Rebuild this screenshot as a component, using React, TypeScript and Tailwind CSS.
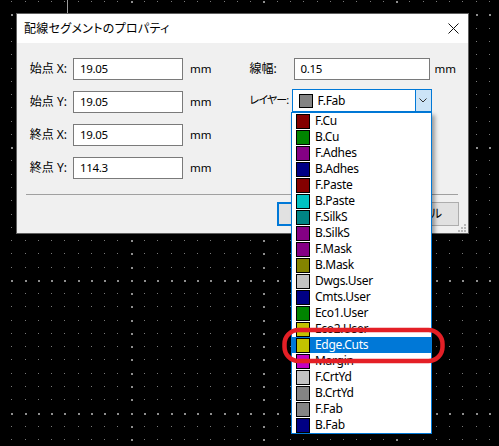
import React from 'react';

const layers: { name: string; color: string }[] = [
  { name: 'F.Cu', color: '#840000' },
  { name: 'B.Cu', color: '#008400' },
  { name: 'F.Adhes', color: '#840084' },
  { name: 'B.Adhes', color: '#000084' },
  { name: 'F.Paste', color: '#840000' },
  { name: 'B.Paste', color: '#00c2c2' },
  { name: 'F.SilkS', color: '#008484' },
  { name: 'B.SilkS', color: '#840084' },
  { name: 'F.Mask', color: '#840084' },
  { name: 'B.Mask', color: '#848400' },
  { name: 'Dwgs.User', color: '#c2c2c2' },
  { name: 'Cmts.User', color: '#000084' },
  { name: 'Eco1.User', color: '#008400' },
  { name: 'Eco2.User', color: '#c2c200' },
  { name: 'Edge.Cuts', color: '#c2c200' },
  { name: 'Margin', color: '#c200c2' },
  { name: 'F.CrtYd', color: '#c2c2c2' },
  { name: 'B.CrtYd', color: '#848484' },
  { name: 'F.Fab', color: '#848484' },
  { name: 'B.Fab', color: '#000084' },
];

const selected = 'Edge.Cuts';

// canvas grid: one dot every ~13.27px, brighter marks every 10th line
const STEP = 13.27;
const gridDots: { x: number; y: number; major: boolean }[] = [];
for (let i = 0; i < 38; i++) {
  for (let j = 0; j < 35; j++) {
    const x = Math.round(11.3 + i * STEP);
    const y = Math.round(1.2 + j * STEP);
    if (x > 499) continue;
    gridDots.push({ x, y, major: i % 10 === 9 || j % 10 === 1 });
  }
}

function CanvasGrid() {
  return (
    <svg className="absolute inset-0" width="499" height="446" shapeRendering="crispEdges">
      {gridDots.map((d, k) => (
        <rect
          key={k}
          x={d.x}
          y={d.y}
          width={d.major ? 2 : 1}
          height={d.major ? 2 : 1}
          fill={d.major ? '#8e8e8e' : '#7a7a7a'}
        />
      ))}
    </svg>
  );
}

function TextInput({ value, width }: { value: string; width: string }) {
  return (
    <div
      className={`flex h-[22px] ${width} items-center border border-[#7a7a7a] bg-white pl-[6px] text-[11.5px] tracking-[-0.3px] text-black`}
    >
      {value}
    </div>
  );
}

function Swatch({ color }: { color: string }) {
  return <span className="h-[15px] w-[14px] shrink-0 border border-black" style={{ backgroundColor: color }} />;
}

function LeftRow({ label, value }: { label: string; value: string }) {
  return (
    <div className="flex h-[22px] items-center">
      <span className="w-[42px] whitespace-nowrap pr-[1px] text-right">{label}</span>
      <div className="ml-[5px]">
        <TextInput value={value} width="w-[110px]" />
      </div>
      <span className="ml-[7px] text-[11.5px]">mm</span>
    </div>
  );
}

export default function App() {
  return (
    <div
      className="relative h-[446px] w-[499px] overflow-hidden bg-black text-[12px] text-black [font-feature-settings:'palt']"
      style={{ fontFamily: '"Noto Sans", "Noto Sans CJK JP", sans-serif' }}
    >
      <CanvasGrid />
      <div className="absolute left-[67px] top-0 h-[13px] w-px bg-[#9c9c9c]" />

      {/* dialog window */}
      <div className="absolute left-[16px] top-[13px] flex h-[221px] w-[453px] flex-col border border-[#5f5f5f] bg-[#f0f0f0]">
        <div className="flex h-[29px] shrink-0 items-center justify-between bg-white pl-[7px] pr-[9px]">
          <span className="text-[12px] leading-none tracking-[0.3px]">配線セグメントのプロパティ</span>
          <svg width="11" height="11" viewBox="0 0 11 11">
            <path d="M0.5 0.5 L10.5 10.5 M10.5 0.5 L0.5 10.5" stroke="#111" strokeWidth="1" />
          </svg>
        </div>

        <div className="relative flex flex-1 flex-col pl-[9px] pr-[10px] pt-[15px]">
          <div className="flex">
            <div className="flex flex-col gap-[11px]">
              <LeftRow label="始点 X:" value="19.05" />
              <LeftRow label="始点 Y:" value="19.05" />
              <LeftRow label="終点 X:" value="19.05" />
              <LeftRow label="終点 Y:" value="114.3" />
            </div>

            <div className="ml-[38px] flex flex-col">
              <div className="flex h-[22px] items-center">
                <span className="w-[44px] whitespace-nowrap">線幅:</span>
                <TextInput value="0.15" width="w-[136px]" />
                <span className="ml-[5px] text-[11.5px]">mm</span>
              </div>
              <div className="mt-[9px] flex h-[23px] items-center">
                <span className="w-[42px] shrink-0 whitespace-nowrap text-[11px] tracking-[-0.9px]">レイヤー:</span>
                <div className="flex h-[23px] w-[140px] shrink-0 border border-[#0078d7] bg-white">
                  <div className="flex flex-1 items-center pl-[6px]">
                    <span className="h-[14px] w-[14px] border border-black bg-[#848484]" />
                    <span className="ml-[5px] text-[12px] tracking-[-0.3px]">F.Fab</span>
                  </div>
                  <div className="flex w-[16px] items-center justify-center border-l border-[#0078d7] bg-[#cce4f7]">
                    <svg width="8" height="5" viewBox="0 0 8 5">
                      <path d="M0.5 0.5 L4 4 L7.5 0.5" fill="none" stroke="#333" strokeWidth="1" />
                    </svg>
                  </div>
                </div>
              </div>
            </div>
          </div>

          <div className="mt-[15px] h-px bg-[#a0a0a0]" />

          <div className="-mr-px mt-[7px] flex justify-end gap-[8px]">
            <div className="flex h-[24px] w-[86px] items-center justify-center border-2 border-[#0078d7] bg-[#e1e1e1]">
              OK
            </div>
            <div className="flex h-[24px] w-[88px] items-center justify-center border border-[#adadad] bg-[#e1e1e1]">
              キャンセル
            </div>
          </div>

          <svg className="absolute bottom-[1px] right-[2px]" width="8" height="8" shapeRendering="crispEdges">
            <rect x="6" y="0" width="2" height="2" fill="#b8b8b8" />
            <rect x="3" y="3" width="2" height="2" fill="#b8b8b8" />
            <rect x="6" y="3" width="2" height="2" fill="#b8b8b8" />
            <rect x="0" y="6" width="2" height="2" fill="#b8b8b8" />
            <rect x="3" y="6" width="2" height="2" fill="#b8b8b8" />
            <rect x="6" y="6" width="2" height="2" fill="#b8b8b8" />
          </svg>
        </div>
      </div>

      {/* open layer list */}
      <div className="absolute left-[291px] top-[112px] w-[141px] border border-[#0078d7] bg-white shadow-[3px_3px_4px_rgba(0,0,0,0.35)]">
        {layers.map((l) => {
          const active = l.name === selected;
          return (
            <div
              key={l.name}
              className={`flex h-[16px] items-center pl-[4px] text-[12px] tracking-[-0.3px] ${
                active ? 'bg-[#0078d7] text-white' : 'text-black'
              }`}
            >
              <Swatch color={l.color} />
              <span className="ml-[5px] leading-none">{l.name}</span>
            </div>
          );
        })}
      </div>

      {/* red highlight mark */}
      <svg className="absolute left-0 top-0" width="499" height="446">
        <rect x="284.5" y="330" width="158" height="31" rx="14" fill="none" stroke="#e41f26" strokeWidth="4.5" />
      </svg>
    </div>
  );
}
